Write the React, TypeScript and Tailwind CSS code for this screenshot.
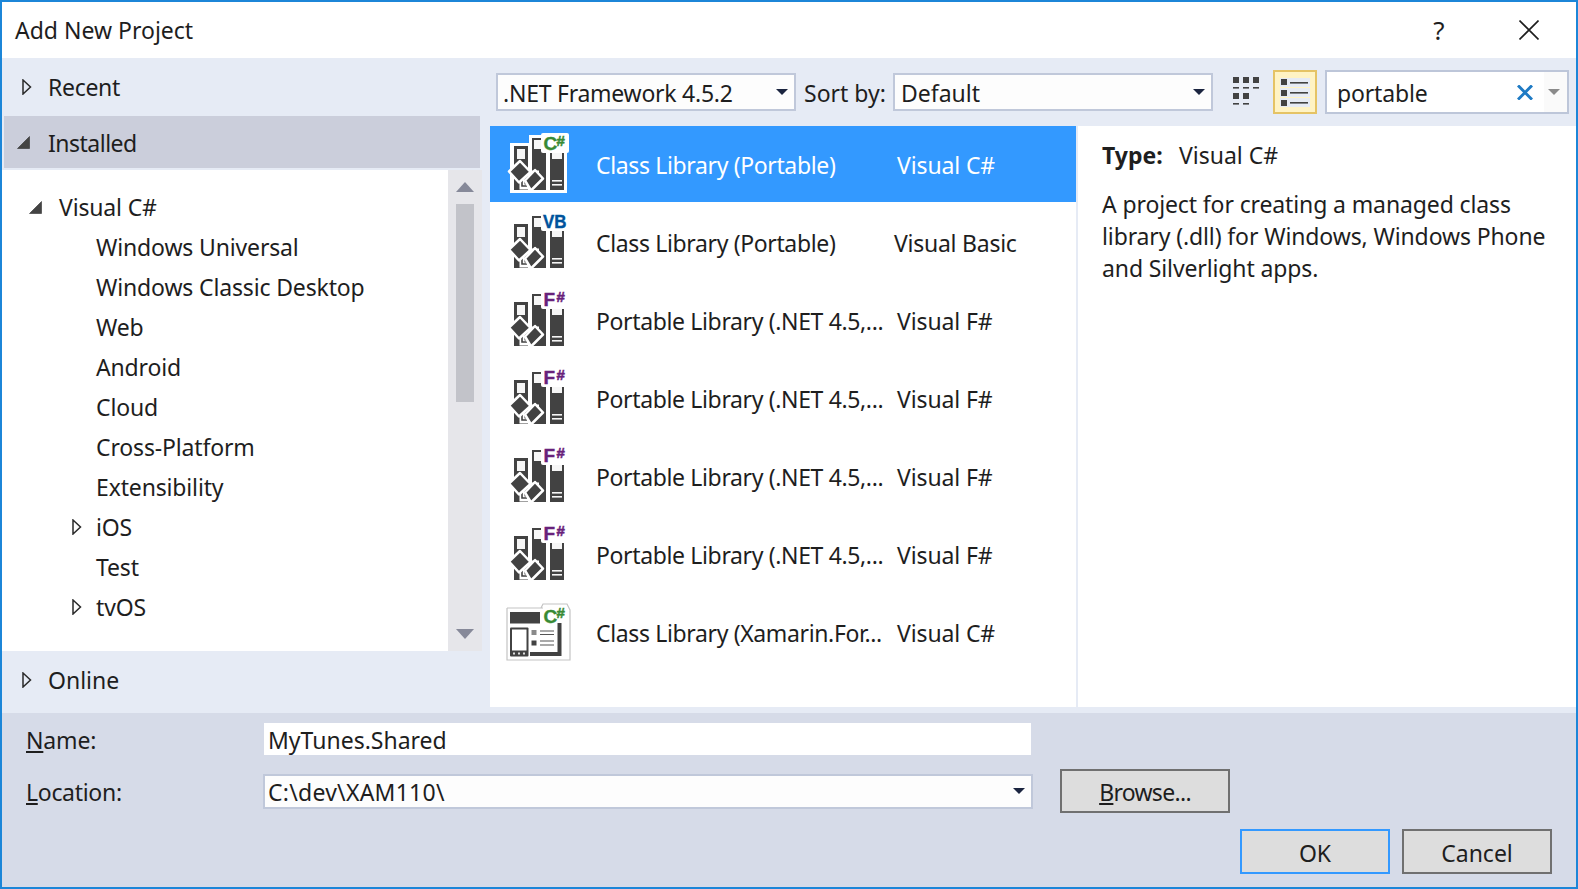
import React from "react";

const font = "font-['Noto_Sans','Open_Sans',sans-serif]";

function Hollow() {
  return (
    <svg width="10" height="16" viewBox="0 0 10 16" className="shrink-0">
      <path d="M1 1 L8.5 8 L1 15 Z" fill="none" stroke="#2a2a2a" strokeWidth="1.5" />
    </svg>
  );
}
function Filled() {
  return (
    <svg width="13" height="13" viewBox="0 0 13 13" className="shrink-0">
      <path d="M0.5 12.5 L12.5 0.5 V12.5 Z" fill="#444444" stroke="#333333" strokeWidth="0.6" />
    </svg>
  );
}
function Caret({ color = "#1b2540", w = 12, h = 6 }: { color?: string; w?: number; h?: number }) {
  return (
    <svg width={w} height={h} viewBox="0 0 12 6" className="shrink-0">
      <path d="M0 0 H12 L6 6 Z" fill={color} />
    </svg>
  );
}

function LibIcon({ lang }: { lang: "C#" | "VB" | "F#" }) {
  const color = lang === "C#" ? "#388a34" : lang === "VB" ? "#00539c" : "#68217a";
  const dark = "#424242";
  const light = "#f6f6f6";
  return (
    <svg width="72" height="64" viewBox="0 0 72 64" className="shrink-0 ml-[15px]">
      <path d="M5 10 H24 V2 H44 V13 H62 V60 H5 Z" fill="#ffffff" />
      <rect x="9" y="13" width="14" height="44" fill={dark} />
      <rect x="12" y="16" width="8" height="10" fill={light} />
      <rect x="27" y="5" width="14" height="52" fill={dark} />
      <rect x="29" y="7" width="8" height="9" fill={light} />
      <rect x="45" y="16" width="14" height="41" fill={dark} />
      <rect x="47" y="17" width="10" height="9" fill={light} />
      <rect x="47" y="47" width="10" height="1.6" fill={light} />
      <rect x="47" y="51" width="10" height="1.6" fill={light} />
      <path d="M17 41 V54 H24 M24 40 H34" fill="none" stroke="#ffffff" strokeWidth="5" />
      <path d="M17 46 V53 H22 M25 41 H33" fill="none" stroke={dark} strokeWidth="1.6" />
      <g stroke="#ffffff" strokeWidth="2.5" fill={dark} strokeLinejoin="round">
        <path d="M4 38.5 L15 28 L25.5 39 L14 49.5 Z" />
        <path d="M20 47.5 L30 37 L38 45.5 L26 57.5 Z" />
      </g>
      <rect x="36" y="0" width="28" height="20" rx="2" fill="#ffffff" />
      {lang === "VB" ? (
        <text
          x="38"
          y="17"
          fontFamily="'Liberation Sans',sans-serif"
          fontWeight="700"
          fontSize="19"
          textLength="23.5"
          lengthAdjust="spacingAndGlyphs"
          fill={color}
          stroke={color}
          strokeWidth="0.4"
        >
          VB
        </text>
      ) : (
        <>
          <text x="38.5" y="17" fontFamily="'Liberation Sans',sans-serif" fontWeight="700" fontSize="19" fill={color} stroke={color} strokeWidth="0.4">
            {lang[0]}
          </text>
          <text x="51.5" y="13" fontFamily="'Liberation Sans',sans-serif" fontWeight="700" fontSize="15" fill={color} stroke={color} strokeWidth="0.5">
            #
          </text>
        </>
      )}
    </svg>
  );
}

function XamIcon() {
  const dark = "#424242";
  return (
    <svg width="72" height="64" viewBox="0 0 72 64" className="shrink-0 ml-[15px]">
      <path d="M2 7 H38 M36 7 L38 3 H62 L65 9 V59 H2 V7" fill="#ffffff" stroke="#c4c4c4" strokeWidth="1.2" />
      <rect x="5" y="11" width="30" height="11.5" fill={dark} />
      <rect x="5" y="26.5" width="18.5" height="29" rx="1" fill={dark} />
      <rect x="7" y="28.5" width="14.5" height="21" fill="#ffffff" />
      <rect x="8" y="51.5" width="2" height="2" fill="#dddddd" />
      <rect x="13" y="51.5" width="2" height="2" fill="#dddddd" />
      <rect x="18" y="51.5" width="2" height="2" fill="#dddddd" />
      <rect x="26.5" y="29" width="5" height="5" fill="#8a8a8a" />
      <rect x="26.5" y="39.5" width="5" height="5" fill={dark} />
      <g stroke="#555555" strokeWidth="1.2">
        <path d="M35 30 H49 M35 33.5 H49 M35 40 H49 M35 44 H49" />
      </g>
      <path d="M54.5 22 V53 H25" fill="none" stroke={dark} strokeWidth="4" />
      <text x="38.5" y="21.5" fontFamily="'Liberation Sans',sans-serif" fontWeight="700" fontSize="19" fill="#388a34" stroke="#388a34" strokeWidth="0.4">
        C
      </text>
      <text x="51.5" y="17" fontFamily="'Liberation Sans',sans-serif" fontWeight="700" fontSize="15" fill="#388a34" stroke="#388a34" strokeWidth="0.5">
        #
      </text>
    </svg>
  );
}

const rows: { lang: "C#" | "VB" | "F#" | "X"; name: string; tag: string; sel?: boolean }[] = [
  { lang: "C#", name: "Class Library (Portable)", tag: "Visual C#", sel: true },
  { lang: "VB", name: "Class Library (Portable)", tag: "Visual Basic" },
  { lang: "F#", name: "Portable Library (.NET 4.5,...", tag: "Visual F#" },
  { lang: "F#", name: "Portable Library (.NET 4.5,...", tag: "Visual F#" },
  { lang: "F#", name: "Portable Library (.NET 4.5,...", tag: "Visual F#" },
  { lang: "F#", name: "Portable Library (.NET 4.5,...", tag: "Visual F#" },
  { lang: "X", name: "Class Library (Xamarin.For...", tag: "Visual C#" },
];

const tree = [
  { t: "Windows Universal" },
  { t: "Windows Classic Desktop" },
  { t: "Web" },
  { t: "Android" },
  { t: "Cloud" },
  { t: "Cross-Platform" },
  { t: "Extensibility" },
  { t: "iOS", a: true },
  { t: "Test" },
  { t: "tvOS", a: true },
];

export default function App() {
  return (
    <div
      className={`${font} w-[1578px] h-[889px] border-2 border-[#1c86d8] flex flex-col text-[23px] text-[#1e1e1e] bg-white overflow-hidden`}
    >
      <div className="h-[56px] flex items-center bg-white shrink-0">
        <div className="pl-[13px] flex-1">Add New Project</div>
        <div className="w-[30px] text-center text-[26px] mr-[65px]">?</div>
        <svg width="20" height="20" viewBox="0 0 20 20" className="mr-[37px]">
          <path d="M0.5 0.5 L19.5 19.5 M19.5 0.5 L0.5 19.5" stroke="#1e1e1e" strokeWidth="1.6" />
        </svg>
      </div>

      <div className="h-[655px] flex bg-[#e6ebf5] shrink-0">
        <div className="w-[488px] shrink-0 flex flex-col">
          <div className="h-[58px] flex items-center pl-[20px] gap-[16px]">
            <Hollow />
            <span className="tracking-[-0.3px]">Recent</span>
          </div>
          <div className="h-[52px] ml-[2px] w-[476px] bg-[#cbcedb] flex items-center pl-[13px] gap-[18px]">
            <Filled />
            <span className="tracking-[-0.5px] pt-[2px]">Installed</span>
          </div>
          <div className="h-[481px] mt-[2px] flex shrink-0">
            <div className="w-[446px] bg-white pt-[17px] tracking-[-0.15px]">
              <div className="h-[40px] flex items-center pl-[27px] gap-[17px]">
                <Filled />
                <span>Visual C#</span>
              </div>
              {tree.map((r) =>
                r.a ? (
                  <div key={r.t} className="h-[40px] flex items-center pl-[70px] gap-[14px]">
                    <Hollow />
                    <span>{r.t}</span>
                  </div>
                ) : (
                  <div key={r.t} className="h-[40px] flex items-center pl-[94px]">
                    {r.t}
                  </div>
                )
              )}
            </div>
            <div className="w-[34px] bg-[#e6e6ea] flex flex-col items-center pt-[12px]">
              <svg width="18" height="10" viewBox="0 0 18 10" className="shrink-0">
                <path d="M0 10 L9 0 L18 10 Z" fill="#868999" />
              </svg>
              <div className="w-[18px] h-[198px] mt-[12px] bg-[#c2c3c9]" />
              <svg width="18" height="10" viewBox="0 0 18 10" className="mt-[227px] shrink-0">
                <path d="M0 0 L18 0 L9 10 Z" fill="#868999" />
              </svg>
            </div>
          </div>
          <div className="flex-1 flex items-center pl-[20px] gap-[16px] pb-[4px]">
            <Hollow />
            <span>Online</span>
          </div>
        </div>

        <div className="flex-1 flex flex-col">
          <div className="h-[68px] flex items-center shrink-0">
            <div className="ml-[6px] w-[300px] h-[38px] border-2 border-[#c0c8da] bg-[#fdfdfd] flex items-center pl-[5px] pr-[6px] justify-between">
              <span className="tracking-[-0.25px] pt-[2px]">.NET Framework 4.5.2</span>
              <Caret />
            </div>
            <span className="ml-[8px] w-[89px] pt-[2px]">Sort by:</span>
            <div className="w-[320px] h-[38px] border-2 border-[#c0c8da] bg-[#fdfdfd] flex items-center pl-[6px] pr-[6px] justify-between">
              <span className="pt-[2px]">Default</span>
              <Caret />
            </div>
            <svg width="28" height="30" viewBox="0 0 28 30" className="ml-[19px] shrink-0">
              <g fill="#424242">
                <rect x="1" y="0" width="6" height="6" />
                <rect x="11" y="0" width="6" height="6" />
                <rect x="21" y="0" width="6" height="6" />
                <rect x="1" y="16" width="6" height="6" />
                <rect x="11" y="16" width="6" height="6" />
                <rect x="1" y="10" width="6" height="1.6" />
                <rect x="11" y="10" width="6" height="1.6" />
                <rect x="21" y="10" width="6" height="1.6" />
                <rect x="1" y="26" width="6" height="1.6" />
                <rect x="11" y="26" width="6" height="1.6" />
              </g>
            </svg>
            <div className="ml-[13px] w-[44px] h-[44px] border-2 border-[#e5c365] bg-[#fff3c4] flex items-center justify-center shrink-0">
              <svg width="32" height="32" viewBox="0 0 32 32">
                <rect x="1" y="2" width="30" height="9" fill="#e6ebf5" />
                <rect x="1" y="12" width="30" height="9" fill="#e6ebf5" />
                <rect x="1" y="22" width="30" height="9" fill="#e6ebf5" />
                <g fill="#424242">
                  <rect x="2" y="3" width="6" height="6" />
                  <rect x="2" y="14" width="6" height="6" />
                  <rect x="2" y="24" width="6" height="6" />
                  <rect x="11" y="6" width="18" height="1.6" />
                  <rect x="11" y="16" width="18" height="1.6" />
                  <rect x="11" y="26" width="18" height="1.6" />
                </g>
              </svg>
            </div>
            <div className="ml-[8px] w-[244px] h-[44px] border-2 border-[#bdc6d9] bg-white flex items-center shrink-0">
              <span className="pl-[10px] flex-1 pt-[2px] tracking-[-0.15px]">portable</span>
              <svg width="16" height="15" viewBox="0 0 16 15" className="mr-[11px]">
                <path d="M1 0.5 L15 14.5 M15 0.5 L1 14.5" stroke="#1e7ac4" strokeWidth="3" />
              </svg>
              <div className="w-[23px] h-full bg-[#fafafa] flex items-center justify-start pl-[4px]">
                <Caret color="#8a8a8a" />
              </div>
            </div>
          </div>

          <div className="h-[581px] flex bg-white shrink-0">
            <div className="w-[586px] shrink-0">
              {rows.map((r, i) => (
                <div
                  key={i}
                  className={
                    r.sel
                      ? "h-[76px] mb-[2px] pt-[2px] flex items-center bg-[#3399ff] text-white"
                      : "h-[78px] flex items-center"
                  }
                >
                  {r.lang === "X" ? <XamIcon /> : <LibIcon lang={r.lang} />}
                  <span className="ml-[19px] w-[301px] whitespace-nowrap tracking-[-0.36px]">{r.name}</span>
                  {r.lang === "VB" ? (
                    <span className="whitespace-nowrap -ml-[3px] tracking-[-0.25px]">{r.tag}</span>
                  ) : (
                    <span className="whitespace-nowrap tracking-[-0.12px]">{r.tag}</span>
                  )}
                </div>
              ))}
            </div>
            <div className="flex-1 border-l-2 border-[#e6ebf5] pl-[24px] pr-[20px] pt-[11px]">
              <div className="h-[36px] flex items-center">
                <span className="font-bold w-[77px]">Type:</span>
                <span>Visual C#</span>
              </div>
              <div className="mt-[15px] leading-[32px] tracking-[-0.12px]">
                A project for creating a managed class
                <br />
                library (.dll) for Windows, Windows Phone
                <br />
                and Silverlight apps.
              </div>
            </div>
          </div>
        </div>
      </div>

      <div className="flex-1 bg-[#d6dbe8] pt-[10px] flex flex-col">
        <div className="h-[32px] flex items-center pl-[24px]">
          <span className="w-[238px] pt-[2px] tracking-[-0.15px]">
            <span className="underline underline-offset-2">N</span>ame:
          </span>
          <div className="w-[767px] h-[32px] bg-white flex items-center pl-[4px] pt-[2px]">MyTunes.Shared</div>
        </div>
        <div className="h-[44px] mt-[14px] flex items-center pl-[24px]">
          <span className="w-[237px] pt-[2px] tracking-[-0.3px]">
            <span className="underline underline-offset-2">L</span>ocation:
          </span>
          <div className="w-[770px] h-[35px] border-2 border-[#c0c8da] bg-[#fdfdfd] flex items-center pl-[3px] pr-[6px] justify-between">
            <span className="pt-[2px] tracking-[0.25px]">C:\dev\XAM110\</span>
            <Caret />
          </div>
          <div className="ml-[27px] w-[170px] h-[44px] border-2 border-[#707070] bg-[#dddddd] flex items-center justify-center">
            <span className="pt-[2px] tracking-[-0.7px]">
              <span className="underline underline-offset-2">B</span>rowse...
            </span>
          </div>
        </div>
        <div className="mt-[16px] flex justify-end gap-[12px] pr-[24px]">
          <div className="w-[150px] h-[45px] border-2 border-[#3399ff] bg-[#dddddd] flex items-center justify-center pt-[3px]">OK</div>
          <div className="w-[150px] h-[45px] border-2 border-[#707070] bg-[#dddddd] flex items-center justify-center pt-[3px]">Cancel</div>
        </div>
      </div>
    </div>
  );
}
